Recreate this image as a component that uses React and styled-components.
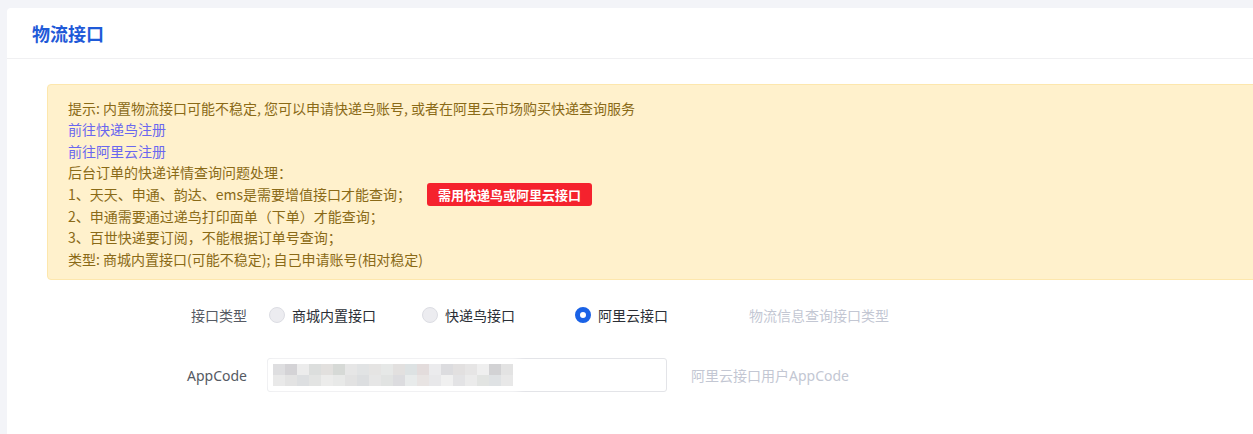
import styled, { createGlobalStyle } from "styled-components";

const GlobalStyle = createGlobalStyle`
  html, body {
    margin: 0;
    padding: 0;
    background: #f3f4f8;
    overflow: hidden;
  }
  body {
    font-family: "Noto Sans", "Noto Sans CJK SC", sans-serif;
  }
`;

const Page = styled.div`
  padding: 8px 0 0 7px;
  height: 426px;
`;

const Card = styled.div`
  width: 1300px;
  height: 440px;
  background: #fff;
  border-radius: 4px;
`;

const Header = styled.div`
  height: 50px;
  display: flex;
  align-items: center;
  padding-left: 25px;
  border-bottom: 1px solid #f0f0f2;
`;

const Title = styled.h2`
  margin: 0;
  font-size: 18px;
  font-weight: 700;
  color: #1f5ad8;
  font-family: "Noto Sans CJK SC", sans-serif;
  line-height: 24px;
`;

const Body = styled.div`
  padding: 25px 0 0 40px;
`;

const Alert = styled.div`
  background: #fff1cc;
  border: 1px solid #fde7ad;
  border-radius: 4px;
  padding: 13px 20px 9px;
  font-size: 14px;
  line-height: 21.3px;
  color: #8a6a17;
  font-family: "Noto Sans CJK SC", sans-serif;
`;

const Line = styled.div`
  display: flex;
  align-items: center;
  min-height: ${(p) => (p.$tall ? "22px" : "21.3px")};
  white-space: nowrap;
`;

const Link = styled.a`
  color: #6a67ef;
  text-decoration: none;
`;

const Badge = styled.span`
  display: inline-block;
  margin-left: 16px;
  padding: 0 11px;
  height: 23px;
  line-height: 23px;
  background: #f5222d;
  color: #fff;
  font-weight: 700;
  font-size: 13px;
  border-radius: 3px;
`;

const Form = styled.div`
  margin-top: 19px;
  display: flex;
  flex-direction: column;
  gap: 27px;
`;

const Row = styled.div`
  display: flex;
  align-items: center;
  height: ${(p) => p.$h || 32}px;
`;

const Label = styled.label`
  width: 200px;
  text-align: right;
  font-size: 14px;
  color: #555a63;
  font-family: "Noto Sans", "Noto Sans CJK SC", sans-serif;
  flex-shrink: 0;
`;

const Control = styled.div`
  margin-left: 20px;
  display: flex;
  align-items: center;
`;

const RadioItem = styled.label`
  width: 153px;
  display: flex;
  align-items: center;
  font-size: 14px;
  color: #2b2f36;
  font-family: "Noto Sans CJK SC", sans-serif;
  cursor: pointer;
`;

const Dot = styled.span`
  width: 16px;
  height: 16px;
  margin: 0 7px 0 2px;
  border-radius: 50%;
  box-sizing: border-box;
  flex-shrink: 0;
  background: ${(p) => (p.$on ? "#fff" : "#ececf0")};
  border: ${(p) => (p.$on ? "5px solid #1a62e6" : "1px solid #dcdde3")};
`;

const Help = styled.span`
  margin-left: ${(p) => p.$gap}px;
  font-size: 14px;
  color: #c3c7d3;
  font-family: "Noto Sans", "Noto Sans CJK SC", sans-serif;
`;

const Input = styled.div`
  width: 400px;
  height: 34px;
  box-sizing: border-box;
  border: 1px solid #e3e4e8;
  border-radius: 3px;
  display: flex;
  align-items: center;
  padding-left: 5px;
`;

const Mosaic = styled.div`
  display: grid;
  grid-template-columns: repeat(20, 12px);
  grid-auto-rows: 11px;
  box-shadow: 0 0 8px 6px rgba(255, 255, 255, 0.9);
`;

const Cell = styled.span`
  background: ${(p) => p.$c};
`;

const mosaic = [
  "#dedee0", "#d4d3d6", "#ececec", "#dcdedd", "#e2e0de", "#d6d9d6", "#e6e6e6", "#e1e3e4",
  "#e5e4e3", "#e6e8e7", "#e2e0df", "#dde2e3", "#e3dcdc", "#ebebed", "#dcdcdf", "#e2e0e0",
  "#e6e5e5", "#efefef", "#d2d2d4", "#e3e3e3",
  "#e9e9e9", "#e3e3e3", "#dddfe1", "#e3e4e3", "#ececeb", "#e8e9e8", "#e2e2e2", "#dcdee0",
  "#e6e6e6", "#e1e3e2", "#dcdcdf", "#e8ebeb", "#e8e4e3", "#e8e8ea", "#f0f0f0", "#e3e3e5",
  "#ebebeb", "#e2e4e2", "#dfe2e4", "#e8e8e8",
];

export default function App() {
  return (
    <>
      <GlobalStyle />
      <Page>
        <Card>
          <Header>
            <Title>物流接口</Title>
          </Header>
          <Body>
            <Alert>
              <Line>提示: 内置物流接口可能不稳定, 您可以申请快递鸟账号, 或者在阿里云市场购买快递查询服务</Line>
              <Line>
                <Link href="#">前往快递鸟注册</Link>
              </Line>
              <Line>
                <Link href="#">前往阿里云注册</Link>
              </Line>
              <Line>后台订单的快递详情查询问题处理：</Line>
              <Line $tall>
                1、天天、申通、韵达、ems是需要增值接口才能查询；
                <Badge>需用快递鸟或阿里云接口</Badge>
              </Line>
              <Line>2、申通需要通过递鸟打印面单（下单）才能查询；</Line>
              <Line>3、百世快递要订阅，不能根据订单号查询；</Line>
              <Line>类型: 商城内置接口(可能不稳定); 自己申请账号(相对稳定)</Line>
            </Alert>
            <Form>
              <Row>
                <Label>接口类型</Label>
                <Control>
                  <RadioItem>
                    <Dot />
                    商城内置接口
                  </RadioItem>
                  <RadioItem>
                    <Dot />
                    快递鸟接口
                  </RadioItem>
                  <RadioItem>
                    <Dot $on />
                    阿里云接口
                  </RadioItem>
                  <Help $gap={23}>物流信息查询接口类型</Help>
                </Control>
              </Row>
              <Row $h={34}>
                <Label>AppCode</Label>
                <Control>
                  <Input>
                    <Mosaic>
                      {mosaic.map((c, i) => (
                        <Cell key={i} $c={c} />
                      ))}
                    </Mosaic>
                  </Input>
                  <Help $gap={24}>阿里云接口用户AppCode</Help>
                </Control>
              </Row>
            </Form>
          </Body>
        </Card>
      </Page>
    </>
  );
}
